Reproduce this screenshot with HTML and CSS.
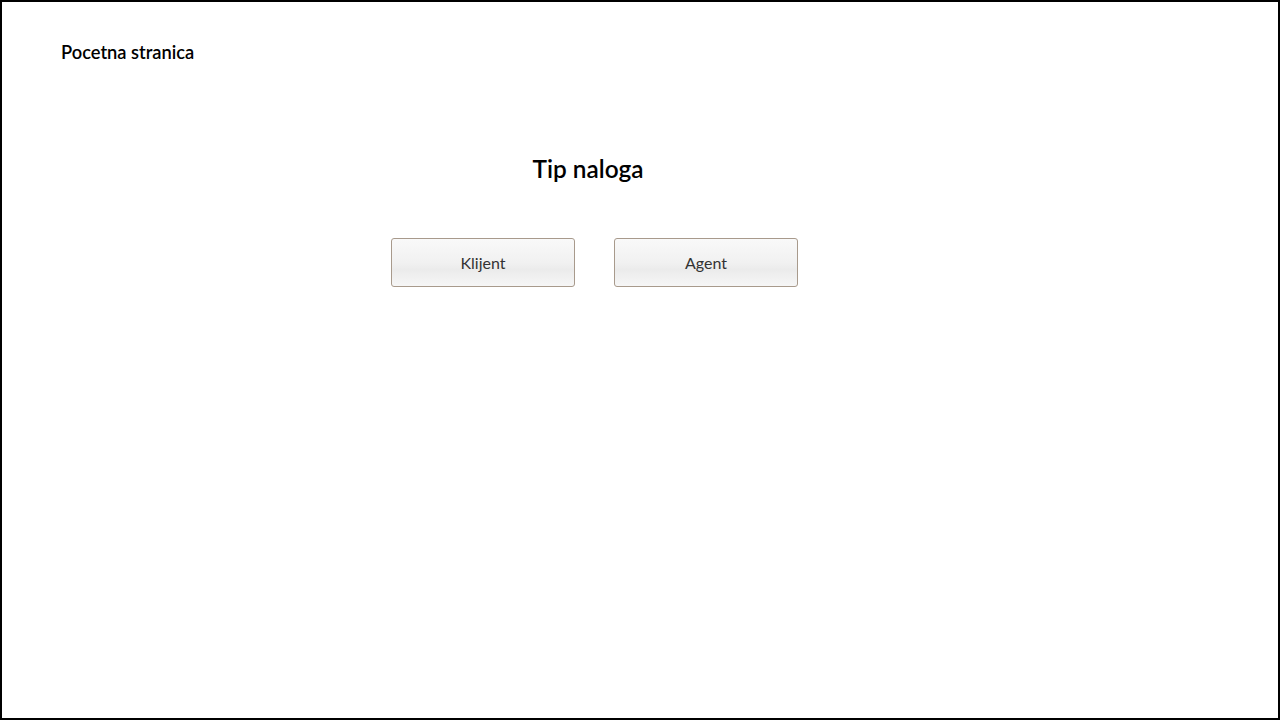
FILE: index.html
```html
<!DOCTYPE html>
<html lang="sr">
<head>
<meta charset="utf-8">
<title>Pocetna stranica</title>
<link rel="stylesheet" href="styles.css">
</head>
<body>
<div class="frame">
  <header class="top">
    <span class="home-link">Pocetna stranica</span>
  </header>
  <main class="content">
    <h1 class="title">Tip naloga</h1>
    <div class="choices">
      <button class="choice">Klijent</button>
      <button class="choice">Agent</button>
    </div>
  </main>
</div>
</body>
</html>
```
FILE: styles.css
```css
* { box-sizing: border-box; }
html, body { margin: 0; padding: 0; background: #fff; }
body { font-family: Lato, "Noto Sans", sans-serif; color: #000; }
.frame {
  width: 1280px;
  height: 720px;
  border: 2px solid #000;
  display: flex;
  flex-direction: column;
}
.top {
  padding: 39px 0 0 59px;
  height: 80px;
}
.home-link {
  font-size: 18.3px;
  font-weight: 600;
  line-height: 22px;
}
.content {
  display: flex;
  flex-direction: column;
  padding-left: 389px;
  width: 800px;
}
.title {
  margin: 72px 0 0 -7px;
  font-size: 24.4px;
  font-weight: 600;
  line-height: 30px;
  text-align: center;
  width: 408px;
}
.choices {
  display: flex;
  gap: 39px;
  margin-top: 54px;
}
.choice {
  width: 184px;
  height: 49px;
  border: 1px solid #a89a8c;
  border-radius: 3px;
  background: linear-gradient(#f9f9f9 0%, #f1f1f1 50%, #ebebeb 65%, #f6f6f6 100%);
  font-family: Lato, "Noto Sans", sans-serif;
  font-size: 16px;
  color: #333;
  padding: 0;
  cursor: pointer;
}
```
